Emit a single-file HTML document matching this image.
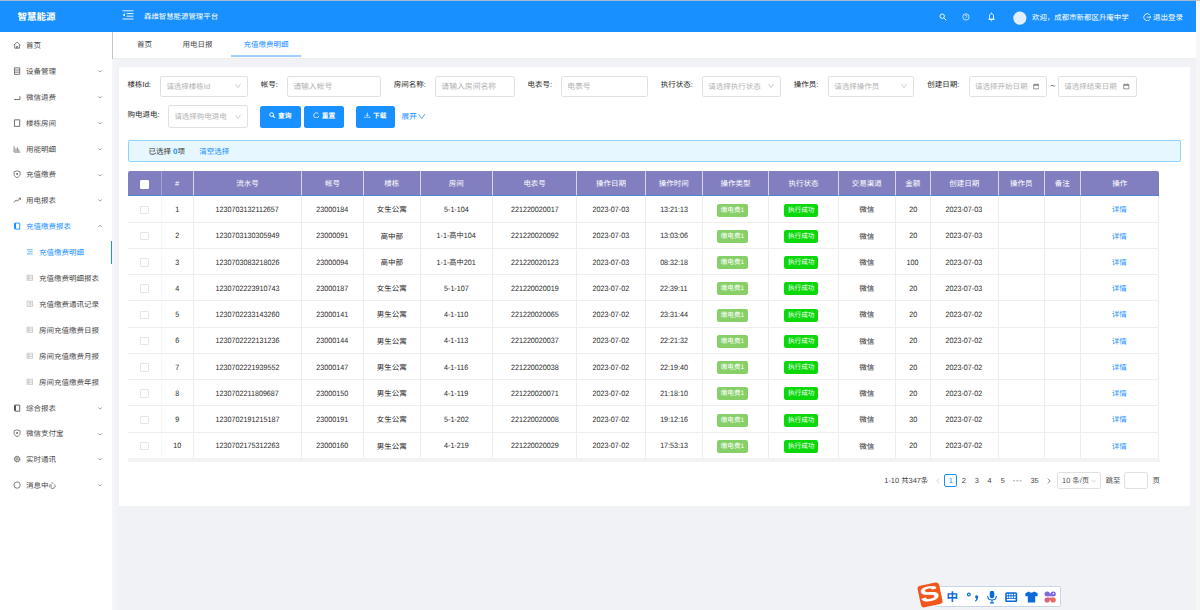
<!DOCTYPE html><html lang="zh-CN"><head><meta charset="utf-8"><title>充值缴费明细</title><style>
*{box-sizing:border-box}
html,body{margin:0;padding:0}
body{width:1200px;height:610px;overflow:hidden;background:#f0f2f5;position:relative;
 font-family:"Liberation Sans","Noto Sans CJK SC",sans-serif;font-size:7.5px;color:#333;-webkit-font-smoothing:antialiased;text-rendering:geometricPrecision}
.abs{position:absolute}
#topline{left:0;top:0;width:1200px;height:1px;background:linear-gradient(90deg,#a4b8d0 0,#a4b8d0 1196px,#c9c9c9 1196px)}
#hdr{left:0;top:1px;width:1196px;height:31px;background:#1890ff;color:#fff}
#sbar{left:1196px;top:1px;width:4px;height:609px;background:#f6f6f6}
#logo{left:17.4px;top:0;height:31px;line-height:34px;font-size:9.5px;font-weight:bold}
#title{left:144px;top:0;height:31px;line-height:32.4px;font-size:7.42px}
#side{left:0;top:32px;width:112.2px;height:578px;background:#fff}
#shadow{left:112.2px;top:59.5px;width:6px;height:551px;background:linear-gradient(90deg,#f5f6f9,#f0f2f5)}
.mi{position:absolute;left:0;width:112px;height:26px;line-height:27.4px;color:#4a4a4a;white-space:nowrap}
.mi span{position:absolute;left:26px;top:0}
.mi.sub span{left:39px}
.mi svg.ic{position:absolute;left:12.7px;top:9.1px;width:8.2px;height:8.2px}
.mi.sub svg.ic{left:25.9px;top:9.4px;width:7.6px;height:7.6px}
.mi svg.ch{position:absolute;left:98.2px;top:11.2px;width:4.4px;height:4.4px}
.mi.act{color:#1890ff}
#tabs{left:112.5px;top:32px;width:1083.5px;height:27.2px;background:#fff;border-bottom:1px solid #eee}
.tab{position:absolute;top:0;height:25px;line-height:25.8px;font-size:7.5px;color:#444;white-space:nowrap}
#card{left:118.7px;top:66.8px;width:1071.3px;height:439.5px;background:#fff}
.lbl{position:absolute;height:12px;line-height:13.6px;color:#222;white-space:nowrap}
.inp{position:absolute;height:20.4px;border:1px solid #e0e0e0;border-radius:2.2px;background:#fff;color:#b2b2b2;line-height:19.6px;padding-left:5.2px;white-space:nowrap}
.inp.big{font-size:7.85px;padding-left:5px}
.inp svg.ar{position:absolute;right:6px;top:6.2px;width:6px;height:5.5px}
.btn{position:absolute;top:105.6px;height:22px;border-radius:2.5px;background:#1890ff;color:#fff;line-height:22.6px;text-align:center;font-size:6.8px;font-weight:bold;white-space:nowrap}
#alert{left:128px;top:140px;width:1053px;height:22px;background:#e6f7ff;border:1px solid #91d5ff;border-radius:2px;line-height:21.6px}
table{position:absolute;left:128px;top:171.3px;border-collapse:separate;border-spacing:0;table-layout:fixed;width:1031px}
th{background:#827fc0;color:#fff;font-weight:normal;height:25px;padding:1.4px 0 0 0;border-right:1px solid #d4d3ea;border-bottom:1px solid #4a86d8;text-align:center;font-size:7.5px}
th:first-child{border-top-left-radius:2px;border-right-color:#a4a2d2}
th:last-child{border-top-right-radius:2px;border-right:none}
td{height:26.265px;padding:1px 0 0 0;border-right:1px solid #ededed;border-bottom:1px solid #eeeeee;text-align:center;font-size:7.5px;color:#2a2a2a;white-space:nowrap}
.n{display:inline-block;transform:scaleX(0.925);font-size:7.75px;position:relative;top:0.2px}
.c{position:relative;top:0.5px}
td:first-child{border-right-color:#f7f7f7}
td:last-child{color:#1890ff}
tbody tr:last-child td{border-bottom-color:#f3f3f3}
.cb{display:inline-block;width:8.5px;height:8.5px;border:1px solid #e5e5e5;border-radius:1px;background:#fff;vertical-align:middle}
th .cb{border-color:#fff}
.tag{display:inline-block;height:13px;line-height:13px;border-radius:2.2px;color:#fff;font-size:6.6px;padding:0 4.2px;vertical-align:middle;margin-right:6px;position:relative;top:0.6px}
.t1{background:#87d068;width:31.2px;padding:0}
.t2{background:#0bd80b;width:34px;padding:0;margin-right:4.6px}
.pg{position:absolute;top:474px;height:13px;line-height:13px;color:#444;white-space:nowrap;font-size:7.4px}
</style></head><body>
<div id="topline" class="abs"></div>
<div id="hdr" class="abs">
<div id="logo" class="abs">智慧能源</div>
<svg class="abs" style="left:122px;top:8.8px;width:12px;height:10px" viewBox="0 0 12 10"><path d="M0.5 0.8 H11.5 M4.6 3.6 H11.5 M4.6 6.2 H11.5 M0.5 9 H11.5" stroke="#fff" stroke-width="0.9" fill="none"/><path d="M0.6 4.9 L2.9 3.3 V6.5 Z" fill="#fff"/></svg>
<div id="title" class="abs">森维智慧能源管理平台</div>
<svg class="abs" style="left:939.3px;top:11.6px;width:8px;height:8px" viewBox="0 0 8 8"><circle cx="3.2" cy="3.2" r="2.2" fill="none" stroke="#fff" stroke-width="0.9"/><path d="M4.8 4.8 L7.2 7.2" stroke="#fff" stroke-width="1"/></svg>
<svg class="abs" style="left:962.4px;top:11.7px;width:7.9px;height:7.9px" viewBox="0 0 9 9"><circle cx="4.5" cy="4.5" r="3.6" fill="none" stroke="#fff" stroke-width="0.8"/><path d="M3.3 3.6 C3.3 2.2 5.7 2.2 5.7 3.6 C5.7 4.5 4.5 4.4 4.5 5.4" fill="none" stroke="#fff" stroke-width="0.7"/><circle cx="4.5" cy="6.6" r="0.45" fill="#fff"/></svg>
<svg class="abs" style="left:987px;top:11.1px;width:9px;height:10px" viewBox="0 0 9 10"><path d="M2.5 7.2 V3.9 C2.5 1 6.5 1 6.5 3.9 V7.2 Z M1.3 7.3 H7.7 M3.9 8.8 H5.1 M4.5 1.6 V0.6" fill="none" stroke="#fff" stroke-width="0.85"/></svg>
<svg class="abs" style="left:1012px;top:9px;width:16px;height:16px" viewBox="0 0 16 16"><circle cx="7.85" cy="8.1" r="6.55" fill="#e3efff"/></svg>
<div class="abs" style="left:1032px;top:0;height:31px;line-height:33px;font-size:7.45px;white-space:nowrap">欢迎，成都市新都区升庵中学</div>
<svg class="abs" style="left:1143.1px;top:12.1px;width:8.4px;height:8.4px" viewBox="0 0 8 8"><path d="M6.5 1.7 A3.35 3.35 0 1 0 6.5 6.3" fill="none" stroke="#fff" stroke-width="0.8"/><path d="M3.6 4 H7.6 M6.5 2.9 L7.6 4 L6.5 5.1" fill="none" stroke="#fff" stroke-width="0.7"/></svg>
<div class="abs" style="left:1153px;top:0;height:31px;line-height:33px;font-size:7.5px;white-space:nowrap">退出登录</div>
</div>
<div id="sbar" class="abs"></div>
<div id="side" class="abs">
<div class="mi" style="top:-0.10px"><svg class="ic" viewBox="0 0 9 9"><path d="M0.8 4.6 L4.5 1.2 L8.2 4.6 M1.9 3.8 V7.9 H7.1 V3.8 M3.8 7.9 V6 H5.2 V7.9" fill="none" stroke="#555" stroke-width="0.8"/></svg><span>首页</span></div>
<div class="mi" style="top:25.80px"><svg class="ic" viewBox="0 0 9 9"><path d="M1.6 0.9 H7.4 V8.1 H1.6 Z M1.6 3.3 H7.4 M1.6 5.7 H7.4" fill="none" stroke="#555" stroke-width="0.85"/></svg><span>设备管理</span><svg class="ch" viewBox="0 0 5 5"><path d="M0.6 1.6 L2.5 3.5 L4.4 1.6" fill="none" stroke="#666" stroke-width="0.75"/></svg></div>
<div class="mi" style="top:51.70px"><svg class="ic" viewBox="0 0 9 9"><path d="M7.6 3.5 V7.2 H2.2 M1.2 7.2 h1.4" fill="none" stroke="#555" stroke-width="0.9"/></svg><span>微信退费</span><svg class="ch" viewBox="0 0 5 5"><path d="M0.6 1.6 L2.5 3.5 L4.4 1.6" fill="none" stroke="#666" stroke-width="0.75"/></svg></div>
<div class="mi" style="top:77.60px"><svg class="ic" viewBox="0 0 9 9"><path d="M1.6 0.9 H7.4 V8.1 H1.6 Z" fill="none" stroke="#555" stroke-width="0.9"/></svg><span>楼栋房间</span><svg class="ch" viewBox="0 0 5 5"><path d="M0.6 1.6 L2.5 3.5 L4.4 1.6" fill="none" stroke="#666" stroke-width="0.75"/></svg></div>
<div class="mi" style="top:103.50px"><svg class="ic" viewBox="0 0 9 9"><path d="M1.2 1.5 V7.8 H8 M3.2 7 V4 M4.8 7 V2.6 M6.4 7 V5" fill="none" stroke="#555" stroke-width="0.8"/></svg><span>用能明细</span><svg class="ch" viewBox="0 0 5 5"><path d="M0.6 1.6 L2.5 3.5 L4.4 1.6" fill="none" stroke="#666" stroke-width="0.75"/></svg></div>
<div class="mi" style="top:129.40px"><svg class="ic" viewBox="0 0 9 9"><path d="M4.5 0.9 L7.8 1.9 V4.6 C7.8 6.5 6.3 7.7 4.5 8.4 C2.7 7.7 1.2 6.5 1.2 4.6 V1.9 Z" fill="none" stroke="#555" stroke-width="0.8"/><circle cx="4.5" cy="4.3" r="1" fill="#555"/></svg><span>充值缴费</span><svg class="ch" viewBox="0 0 5 5"><path d="M0.6 1.6 L2.5 3.5 L4.4 1.6" fill="none" stroke="#666" stroke-width="0.75"/></svg></div>
<div class="mi" style="top:155.30px"><svg class="ic" viewBox="0 0 9 9"><path d="M1 7.2 L3.4 4.4 L5 5.6 L8 2.4 M6.2 2.3 H8.1 V4.2" fill="none" stroke="#555" stroke-width="0.85"/></svg><span>用电报表</span><svg class="ch" viewBox="0 0 5 5"><path d="M0.6 1.6 L2.5 3.5 L4.4 1.6" fill="none" stroke="#666" stroke-width="0.75"/></svg></div>
<div class="mi act" style="top:181.20px"><svg class="ic" viewBox="0 0 9 9"><path d="M2.3 1.2 H7.4 V7.9 H3 C1.9 7.9 1.6 7.3 1.6 6.7 V2 C1.6 1.5 1.9 1.2 2.3 1.2 Z" fill="none" stroke="#1890ff" stroke-width="1"/><path d="M1.3 1.4 h2 v6 h-2z" fill="#1890ff"/></svg><span>充值缴费报表</span><svg class="ch" viewBox="0 0 5 5"><path d="M0.6 3.4 L2.5 1.5 L4.4 3.4" fill="none" stroke="#666" stroke-width="0.75"/></svg></div>
<div class="mi sub act" style="top:207.10px"><svg class="ic" viewBox="0 0 9 9"><path d="M1.2 2 H7.8 M2.4 4.5 H7.8 M1.2 7 H7.8" fill="none" stroke="#1890ff" stroke-width="0.8"/></svg><span>充值缴费明细</span></div>
<div class="mi sub" style="top:233.00px"><svg class="ic" viewBox="0 0 9 9"><path d="M1.2 1.4 H7.8 V7.6 H1.2 Z M1.2 3.4 H7.8 M1.2 5.5 H7.8 M3.4 1.4 V7.6" fill="none" stroke="#aaa" stroke-width="0.6"/></svg><span>充值缴费明细报表</span></div>
<div class="mi sub" style="top:258.90px"><svg class="ic" viewBox="0 0 9 9"><path d="M1.2 1.4 H7.8 V7.6 H1.2 Z M3 3.2 H6.6 M3 4.6 H6.6 M3 6 H6.6" fill="none" stroke="#aaa" stroke-width="0.7"/></svg><span>充值缴费通讯记录</span></div>
<div class="mi sub" style="top:284.80px"><svg class="ic" viewBox="0 0 9 9"><path d="M1.2 1.4 H7.8 V7.6 H1.2 Z M1.2 3.4 H7.8 M1.2 5.5 H7.8 M3.4 1.4 V7.6" fill="none" stroke="#aaa" stroke-width="0.6"/></svg><span>房间充值缴费日报</span></div>
<div class="mi sub" style="top:310.70px"><svg class="ic" viewBox="0 0 9 9"><path d="M1.2 1.4 H7.8 V7.6 H1.2 Z M1.2 3.4 H7.8 M1.2 5.5 H7.8 M3.4 1.4 V7.6" fill="none" stroke="#aaa" stroke-width="0.6"/></svg><span>房间充值缴费月报</span></div>
<div class="mi sub" style="top:336.60px"><svg class="ic" viewBox="0 0 9 9"><path d="M1.2 1.4 H7.8 V7.6 H1.2 Z M1.2 3.4 H7.8 M1.2 5.5 H7.8 M3.4 1.4 V7.6" fill="none" stroke="#aaa" stroke-width="0.6"/></svg><span>房间充值缴费年报</span></div>
<div class="mi" style="top:362.50px"><svg class="ic" viewBox="0 0 9 9"><path d="M2.3 1.2 H7.4 V7.9 H3 C1.9 7.9 1.6 7.3 1.6 6.7 V2 C1.6 1.5 1.9 1.2 2.3 1.2 Z" fill="none" stroke="#555" stroke-width="1"/><path d="M1.3 1.4 h2 v6 h-2z" fill="#555"/></svg><span>综合报表</span><svg class="ch" viewBox="0 0 5 5"><path d="M0.6 1.6 L2.5 3.5 L4.4 1.6" fill="none" stroke="#666" stroke-width="0.75"/></svg></div>
<div class="mi" style="top:388.40px"><svg class="ic" viewBox="0 0 9 9"><path d="M4.5 0.9 L7.8 1.9 V4.6 C7.8 6.5 6.3 7.7 4.5 8.4 C2.7 7.7 1.2 6.5 1.2 4.6 V1.9 Z" fill="none" stroke="#555" stroke-width="0.8"/><circle cx="4.5" cy="4.3" r="1" fill="#555"/></svg><span>微信支付宝</span><svg class="ch" viewBox="0 0 5 5"><path d="M0.6 1.6 L2.5 3.5 L4.4 1.6" fill="none" stroke="#666" stroke-width="0.75"/></svg></div>
<div class="mi" style="top:414.30px"><svg class="ic" viewBox="0 0 9 9"><circle cx="4.5" cy="4.5" r="3.1" fill="none" stroke="#555" stroke-width="0.9" stroke-dasharray="1.6 0.83"/><circle cx="4.5" cy="4.5" r="2.6" fill="none" stroke="#555" stroke-width="0.7"/><circle cx="4.5" cy="4.5" r="1.1" fill="none" stroke="#555" stroke-width="0.7"/></svg><span>实时通讯</span><svg class="ch" viewBox="0 0 5 5"><path d="M0.6 1.6 L2.5 3.5 L4.4 1.6" fill="none" stroke="#666" stroke-width="0.75"/></svg></div>
<div class="mi" style="top:440.20px"><svg class="ic" viewBox="0 0 9 9"><circle cx="4.5" cy="4.5" r="3.5" fill="none" stroke="#555" stroke-width="0.8"/></svg><span>消息中心</span><svg class="ch" viewBox="0 0 5 5"><path d="M0.6 1.6 L2.5 3.5 L4.4 1.6" fill="none" stroke="#666" stroke-width="0.75"/></svg></div>
<div class="abs" style="left:110.6px;top:208.5px;width:1.6px;height:23px;background:#1890ff"></div>
</div>
<div id="shadow" class="abs"></div>
<div id="tabs" class="abs">
<div class="tab" style="left:24.5px">首页</div>
<div class="tab" style="left:70px">用电日报</div>
<div class="tab" style="left:131px;color:#1890ff">充值缴费明细</div>
<div class="abs" style="left:118.5px;top:23.4px;width:70px;height:1.3px;background:#9fd0ff"></div>
<div class="abs" style="left:-0.3px;top:0;width:0.7px;height:27.2px;background:#c4c4c4"></div>
</div>
<div id="card" class="abs"></div>
<div class="lbl" style="left:127.6px;top:78px">楼栋Id:</div>
<div class="inp" style="left:160.2px;top:76.2px;width:87.4px">请选择楼栋Id<svg class="ar" viewBox="0 0 6 5.5"><path d="M0.5 0.9 L3 4.6 L5.5 0.9" fill="none" stroke="#b8b8b8" stroke-width="0.7"/></svg></div>
<div class="lbl" style="left:260.8px;top:78px">帐号:</div>
<div class="inp big" style="left:287.2px;top:76.2px;width:93.4px">请输入帐号</div>
<div class="lbl" style="left:393.8px;top:78px">房间名称:</div>
<div class="inp big" style="left:435.3px;top:76.2px;width:79.3px">请输入房间名称</div>
<div class="lbl" style="left:527.4px;top:78px">电表号:</div>
<div class="inp big" style="left:561.2px;top:76.2px;width:86.4px">电表号</div>
<div class="lbl" style="left:660.8px;top:78px">执行状态:</div>
<div class="inp" style="left:702px;top:76.2px;width:78.6px">请选择执行状态<svg class="ar" viewBox="0 0 6 5.5"><path d="M0.5 0.9 L3 4.6 L5.5 0.9" fill="none" stroke="#b8b8b8" stroke-width="0.7"/></svg></div>
<div class="lbl" style="left:793.8px;top:78px">操作员:</div>
<div class="inp" style="left:828px;top:76.2px;width:86px">请选择操作员<svg class="ar" viewBox="0 0 6 5.5"><path d="M0.5 0.9 L3 4.6 L5.5 0.9" fill="none" stroke="#b8b8b8" stroke-width="0.7"/></svg></div>
<div class="lbl" style="left:927.3px;top:78px">创建日期:</div>
<div class="inp" style="left:968.8px;top:76.2px;width:78.2px">请选择开始日期<svg style="position:absolute;right:6.5px;top:6px;width:6.5px;height:6.5px" viewBox="0 0 7 7"><path d="M0.7 1.6 H6.3 V6.3 H0.7 Z" fill="none" stroke="#666" stroke-width="0.7"/><path d="M0.7 2.6 H6.3 M2.1 0.5 V1.8 M4.9 0.5 V1.8" stroke="#666" stroke-width="0.7"/></svg></div>
<div class="lbl" style="left:1050px;top:80.2px;color:#444;font-size:9.5px">~</div>
<div class="inp" style="left:1058.1px;top:76.2px;width:79.2px">请选择结束日期<svg style="position:absolute;right:6.5px;top:6px;width:6.5px;height:6.5px" viewBox="0 0 7 7"><path d="M0.7 1.6 H6.3 V6.3 H0.7 Z" fill="none" stroke="#666" stroke-width="0.7"/><path d="M0.7 2.6 H6.3 M2.1 0.5 V1.8 M4.9 0.5 V1.8" stroke="#666" stroke-width="0.7"/></svg></div>
<div class="lbl" style="left:127.6px;top:108.2px">购电退电:</div>
<div class="inp" style="left:168.2px;top:105.2px;width:79.4px;height:22.4px;line-height:21.0px">请选择购电退电<svg class="ar" style="top:8.3px" viewBox="0 0 6 5.5"><path d="M0.5 0.9 L3 4.6 L5.5 0.9" fill="none" stroke="#b8b8b8" stroke-width="0.7"/></svg></div>
<div class="btn" style="left:260.4px;width:40.2px"><svg style="width:6.6px;height:6.6px;vertical-align:-0.9px;margin-right:2.2px" viewBox="0 0 8 8"><circle cx="3.2" cy="3.2" r="2.3" fill="none" stroke="#fff" stroke-width="1.15"/><path d="M4.8 4.8 L7.2 7.2" stroke="#fff" stroke-width="1.3"/></svg>查询</div>
<div class="btn" style="left:304.4px;width:39.6px"><svg style="width:6.6px;height:6.6px;vertical-align:-0.9px;margin-right:2.2px" viewBox="0 0 8 8"><path d="M6.6 2.4 A3.1 3.1 0 1 0 7 5" fill="none" stroke="#fff" stroke-width="1"/></svg>重置</div>
<div class="btn" style="left:355.6px;width:39.4px"><svg style="width:6.6px;height:6.6px;vertical-align:-0.9px;margin-right:2.2px" viewBox="0 0 8 8"><path d="M4 0.8 V5 M2.4 3.6 L4 5.2 L5.6 3.6 M1 5.6 V7.2 H7 V5.6" fill="none" stroke="#fff" stroke-width="0.9"/></svg>下载</div>
<div class="lbl" style="left:401.6px;top:109.6px;color:#1890ff;font-size:7.6px">展开<svg style="width:7.4px;height:6.6px;margin-left:0.8px;vertical-align:-0.6px" viewBox="0 0 7 6"><path d="M0.5 0.9 L3.5 5.2 L6.5 0.9" fill="none" stroke="#1890ff" stroke-width="0.7"/></svg></div>
<div id="alert" class="abs"><span class="abs" style="left:19.5px;top:0;white-space:nowrap;color:#333">已选择 <b style="color:#1890ff;font-weight:bold;font-size:7.8px">0</b>项</span><span class="abs" style="left:70.2px;top:0;white-space:nowrap;color:#1890ff">清空选择</span></div>
<table><colgroup>
<col style="width:33.50px">
<col style="width:32.30px">
<col style="width:108.40px">
<col style="width:61.60px">
<col style="width:57.00px">
<col style="width:72.00px">
<col style="width:84.70px">
<col style="width:68.30px">
<col style="width:57.00px">
<col style="width:66.40px">
<col style="width:69.60px">
<col style="width:57.20px">
<col style="width:34.80px">
<col style="width:68.00px">
<col style="width:46.00px">
<col style="width:36.00px">
<col style="width:78.20px">
</colgroup><thead><tr>
<th><span class="cb" style="background:#fff"></span></th>
<th>#</th>
<th>流水号</th>
<th>帐号</th>
<th>楼栋</th>
<th>房间</th>
<th>电表号</th>
<th>操作日期</th>
<th>操作时间</th>
<th>操作类型</th>
<th>执行状态</th>
<th>交易渠道</th>
<th>金额</th>
<th>创建日期</th>
<th>操作员</th>
<th>备注</th>
<th>操作</th>
</tr></thead><tbody>
<tr><td><span class="cb"></span></td><td><span class="n">1</span></td><td><span class="n">1230703132112657</span></td><td><span class="n">23000184</span></td><td><span class="c">女生公寓</span></td><td><span class="n">5-1-104</span></td><td><span class="n">221220020017</span></td><td><span class="n">2023-07-03</span></td><td><span class="n">13:21:13</span></td><td><span class="tag t1">缴电费1</span></td><td><span class="tag t2">执行成功</span></td><td><span class="c">微信</span></td><td><span class="n">20</span></td><td><span class="n">2023-07-03</span></td><td></td><td></td><td><span class="c">详情</span></td></tr>
<tr><td><span class="cb"></span></td><td><span class="n">2</span></td><td><span class="n">1230703130305949</span></td><td><span class="n">23000091</span></td><td><span class="c">高中部</span></td><td><span class="n">1-1-高中104</span></td><td><span class="n">221220020092</span></td><td><span class="n">2023-07-03</span></td><td><span class="n">13:03:06</span></td><td><span class="tag t1">缴电费1</span></td><td><span class="tag t2">执行成功</span></td><td><span class="c">微信</span></td><td><span class="n">20</span></td><td><span class="n">2023-07-03</span></td><td></td><td></td><td><span class="c">详情</span></td></tr>
<tr><td><span class="cb"></span></td><td><span class="n">3</span></td><td><span class="n">1230703083218026</span></td><td><span class="n">23000094</span></td><td><span class="c">高中部</span></td><td><span class="n">1-1-高中201</span></td><td><span class="n">221220020123</span></td><td><span class="n">2023-07-03</span></td><td><span class="n">08:32:18</span></td><td><span class="tag t1">缴电费1</span></td><td><span class="tag t2">执行成功</span></td><td><span class="c">微信</span></td><td><span class="n">100</span></td><td><span class="n">2023-07-03</span></td><td></td><td></td><td><span class="c">详情</span></td></tr>
<tr><td><span class="cb"></span></td><td><span class="n">4</span></td><td><span class="n">1230702223910743</span></td><td><span class="n">23000187</span></td><td><span class="c">女生公寓</span></td><td><span class="n">5-1-107</span></td><td><span class="n">221220020019</span></td><td><span class="n">2023-07-02</span></td><td><span class="n">22:39:11</span></td><td><span class="tag t1">缴电费1</span></td><td><span class="tag t2">执行成功</span></td><td><span class="c">微信</span></td><td><span class="n">20</span></td><td><span class="n">2023-07-03</span></td><td></td><td></td><td><span class="c">详情</span></td></tr>
<tr><td><span class="cb"></span></td><td><span class="n">5</span></td><td><span class="n">1230702233143260</span></td><td><span class="n">23000141</span></td><td><span class="c">男生公寓</span></td><td><span class="n">4-1-110</span></td><td><span class="n">221220020065</span></td><td><span class="n">2023-07-02</span></td><td><span class="n">23:31:44</span></td><td><span class="tag t1">缴电费1</span></td><td><span class="tag t2">执行成功</span></td><td><span class="c">微信</span></td><td><span class="n">20</span></td><td><span class="n">2023-07-02</span></td><td></td><td></td><td><span class="c">详情</span></td></tr>
<tr><td><span class="cb"></span></td><td><span class="n">6</span></td><td><span class="n">1230702222131236</span></td><td><span class="n">23000144</span></td><td><span class="c">男生公寓</span></td><td><span class="n">4-1-113</span></td><td><span class="n">221220020037</span></td><td><span class="n">2023-07-02</span></td><td><span class="n">22:21:32</span></td><td><span class="tag t1">缴电费1</span></td><td><span class="tag t2">执行成功</span></td><td><span class="c">微信</span></td><td><span class="n">20</span></td><td><span class="n">2023-07-02</span></td><td></td><td></td><td><span class="c">详情</span></td></tr>
<tr><td><span class="cb"></span></td><td><span class="n">7</span></td><td><span class="n">1230702221939552</span></td><td><span class="n">23000147</span></td><td><span class="c">男生公寓</span></td><td><span class="n">4-1-116</span></td><td><span class="n">221220020038</span></td><td><span class="n">2023-07-02</span></td><td><span class="n">22:19:40</span></td><td><span class="tag t1">缴电费1</span></td><td><span class="tag t2">执行成功</span></td><td><span class="c">微信</span></td><td><span class="n">20</span></td><td><span class="n">2023-07-02</span></td><td></td><td></td><td><span class="c">详情</span></td></tr>
<tr><td><span class="cb"></span></td><td><span class="n">8</span></td><td><span class="n">1230702211809687</span></td><td><span class="n">23000150</span></td><td><span class="c">男生公寓</span></td><td><span class="n">4-1-119</span></td><td><span class="n">221220020071</span></td><td><span class="n">2023-07-02</span></td><td><span class="n">21:18:10</span></td><td><span class="tag t1">缴电费1</span></td><td><span class="tag t2">执行成功</span></td><td><span class="c">微信</span></td><td><span class="n">20</span></td><td><span class="n">2023-07-02</span></td><td></td><td></td><td><span class="c">详情</span></td></tr>
<tr><td><span class="cb"></span></td><td><span class="n">9</span></td><td><span class="n">1230702191215187</span></td><td><span class="n">23000191</span></td><td><span class="c">女生公寓</span></td><td><span class="n">5-1-202</span></td><td><span class="n">221220020008</span></td><td><span class="n">2023-07-02</span></td><td><span class="n">19:12:16</span></td><td><span class="tag t1">缴电费1</span></td><td><span class="tag t2">执行成功</span></td><td><span class="c">微信</span></td><td><span class="n">30</span></td><td><span class="n">2023-07-02</span></td><td></td><td></td><td><span class="c">详情</span></td></tr>
<tr><td><span class="cb"></span></td><td><span class="n">10</span></td><td><span class="n">1230702175312263</span></td><td><span class="n">23000160</span></td><td><span class="c">男生公寓</span></td><td><span class="n">4-1-219</span></td><td><span class="n">221220020029</span></td><td><span class="n">2023-07-02</span></td><td><span class="n">17:53:13</span></td><td><span class="tag t1">缴电费1</span></td><td><span class="tag t2">执行成功</span></td><td><span class="c">微信</span></td><td><span class="n">20</span></td><td><span class="n">2023-07-02</span></td><td></td><td></td><td><span class="c">详情</span></td></tr>
</tbody></table>
<div class="abs" style="left:128px;top:458.5px;width:1031.5px;height:3.5px;background:#f3f3f3"></div>
<div class="pg" style="left:884.3px;">1-10 共347条</div>
<svg class="abs" style="left:935.5px;top:477.5px;width:4px;height:6px" viewBox="0 0 4 6"><path d="M3.2 0.6 L0.8 3 L3.2 5.4" fill="none" stroke="#bbb" stroke-width="0.7"/></svg>
<div class="abs" style="left:944.3px;top:474.1px;width:12.9px;height:12.6px;border:1px solid #1890ff;border-radius:2px;background:#fff"></div>
<div class="pg" style="left:940.8px;width:20px;text-align:center;color:#1890ff">1</div>
<div class="pg" style="left:953.8px;width:20px;text-align:center;color:#444">2</div>
<div class="pg" style="left:966.7px;width:20px;text-align:center;color:#444">3</div>
<div class="pg" style="left:979.6px;width:20px;text-align:center;color:#444">4</div>
<div class="pg" style="left:992.8px;width:20px;text-align:center;color:#444">5</div>
<div class="pg" style="left:1024.5px;width:20px;text-align:center;color:#444">35</div>
<div class="pg" style="left:1007.7px;width:20px;text-align:center;color:#bbb;letter-spacing:0.8px;font-size:7px;line-height:15.5px">•••</div>
<svg class="abs" style="left:1047px;top:477.5px;width:4px;height:6px" viewBox="0 0 4 6"><path d="M0.8 0.6 L3.2 3 L0.8 5.4" fill="none" stroke="#555" stroke-width="0.7"/></svg>
<div class="inp" style="left:1056.5px;top:471.5px;width:44px;height:17.8px;line-height:16.5px;color:#555;padding-left:4.6px;font-size:7.4px">10 条/页<svg class="ar" style="right:3.6px;top:6.5px;width:5px;height:4.2px" viewBox="0 0 6 5"><path d="M0.6 1.2 L3 3.8 L5.4 1.2" fill="none" stroke="#bfbfbf" stroke-width="0.8"/></svg></div>
<div class="pg" style="left:1105.7px;">跳至</div>
<div class="inp" style="left:1124.4px;top:471.5px;width:23.4px;height:17.8px"></div>
<div class="pg" style="left:1152.5px;">页</div>
<div class="abs" style="left:934.5px;top:586px;width:126px;height:20.6px;background:#fff;border:1px solid #c8d5e9;border-radius:1.6px"></div>
<div class="abs" style="left:918.7px;top:583.8px;width:21.6px;height:21.6px;background:#f2561f;border-radius:3.2px;transform:rotate(-12deg)"></div>
<div class="abs" style="left:917px;top:581.9px;width:25px;height:25px;line-height:25px;text-align:center;color:#fff;font-weight:bold;font-size:21px;font-family:'Liberation Sans',sans-serif;transform:rotate(-12deg) scale(1.38,1.0)">S</div>
<div class="abs" style="left:945.4px;top:588.7px;width:14px;height:18px;line-height:18px;text-align:center;color:#0b6bdb;font-weight:bold;font-size:11.6px">中</div>
<svg class="abs" style="left:964.9px;top:588.6px;width:16.8px;height:15.6px" viewBox="0 0 14 13"><circle cx="3.2" cy="4.6" r="1.15" fill="none" stroke="#0b6bdb" stroke-width="1"/><path d="M8.5 6.6 a1.25 1.25 0 1 1 2.3 0.6 c0 1.6 -0.8 2.6 -2.3 3.2 l-0.3 -0.6 c0.8 -0.5 1.2 -1 1.2 -1.8 a1.25 1.25 0 0 1 -0.9 -1.4z" fill="#0b6bdb"/></svg>
<svg class="abs" style="left:986px;top:589.5px;width:12px;height:14px" viewBox="0 0 12 14"><rect x="3.7" y="0.8" width="4.6" height="7.6" rx="2.3" fill="#0b6bdb"/><path d="M1.7 6 C1.7 11.4 10.3 11.4 10.3 6 M6 10.2 V12.7 M4 12.9 H8" fill="none" stroke="#0b6bdb" stroke-width="1.1"/></svg>
<svg class="abs" style="left:1005.3px;top:591.6px;width:12.4px;height:10.4px" viewBox="0 0 12.4 10.4"><rect x="0.2" y="0.2" width="12" height="10" rx="1.6" fill="#0b6bdb"/><g fill="#fff"><rect x="1.8" y="1.8" width="1.5" height="1.5"/><rect x="4.1" y="1.8" width="1.5" height="1.5"/><rect x="6.4" y="1.8" width="1.5" height="1.5"/><rect x="8.8" y="1.8" width="1.8" height="1.5"/><rect x="1.8" y="4.3" width="1.5" height="1.8"/><rect x="4.1" y="4.3" width="1.5" height="1.8"/><rect x="6.4" y="4.3" width="1.5" height="1.8"/><rect x="8.8" y="4.3" width="1.8" height="1.8"/><rect x="1.8" y="6.9" width="8.8" height="1.6"/></g></svg>
<svg class="abs" style="left:1024.6px;top:590.6px;width:13px;height:12px" viewBox="0 0 13 12"><path d="M3.9 0.6 C4.9 2 8.1 2 9.1 0.6 L12.6 2.2 V5.2 H10.2 V11.5 H2.8 V5.2 H0.4 V2.2 Z" fill="#0b6bdb"/></svg>
<svg class="abs" style="left:1043.8px;top:590.6px;width:12.4px;height:12px" viewBox="0 0 12.4 12"><defs><linearGradient id="g4" x1="0" y1="0" x2="1" y2="0"><stop offset="0" stop-color="#c45fa8"/><stop offset="1" stop-color="#ff7038"/></linearGradient></defs><circle cx="3.2" cy="3" r="2.6" fill="#7a66ea"/><circle cx="9.2" cy="3" r="2.6" fill="#6d63e6"/><rect x="3.2" y="2.6" width="6" height="2.9" fill="#8a68dc"/><circle cx="9.4" cy="2.6" r="0.8" fill="#fff"/><g fill="url(#g4)"><circle cx="3.2" cy="8.9" r="2.6"/><circle cx="9.2" cy="8.9" r="2.6"/><rect x="3.2" y="6.4" width="6" height="2.9"/></g><rect x="0" y="5.55" width="12.4" height="0.8" fill="#fff"/></svg>
</body></html>
